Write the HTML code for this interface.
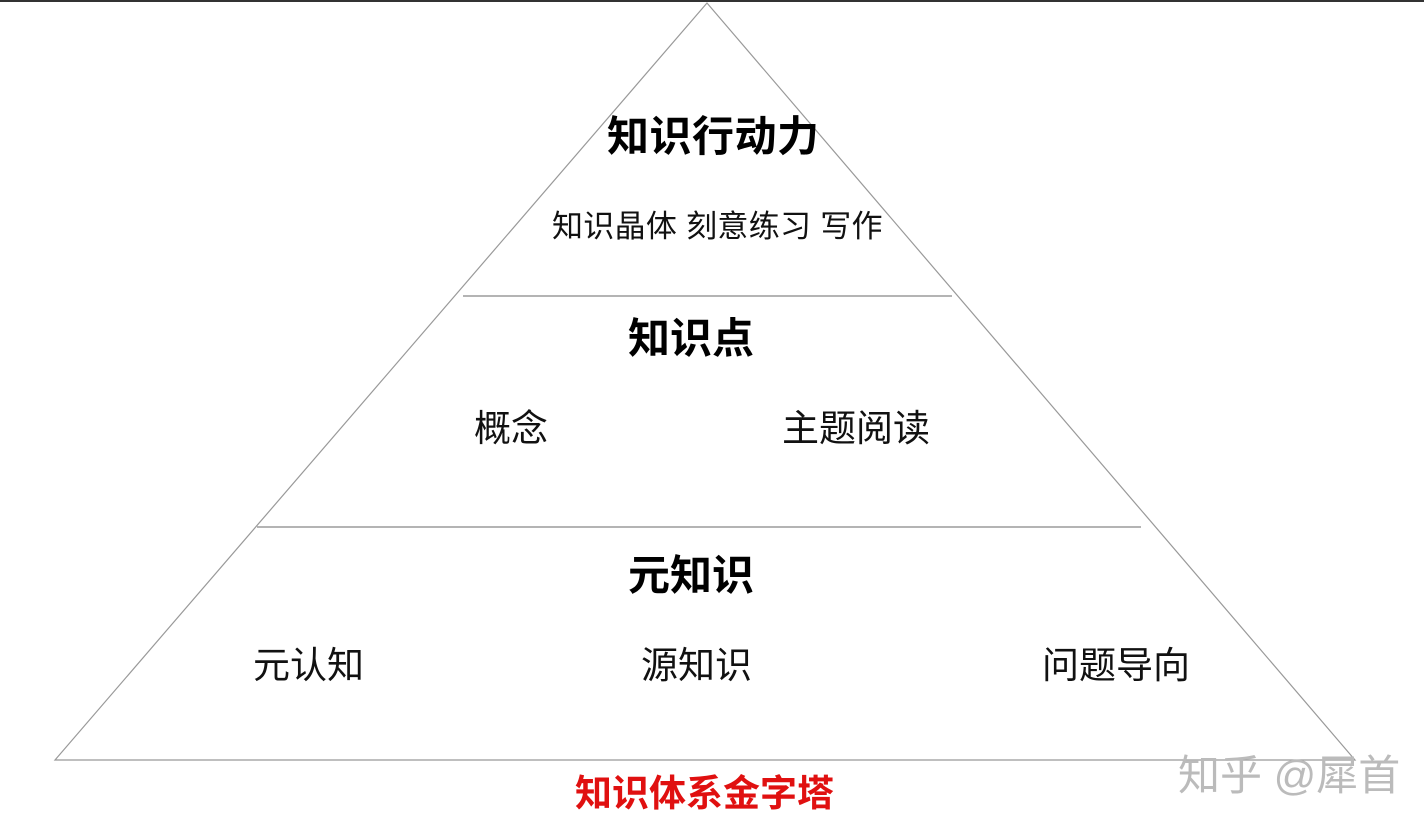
<!DOCTYPE html>
<html><head><meta charset="utf-8"><style>
html,body{margin:0;padding:0;background:#fff;width:1424px;height:830px;overflow:hidden;position:relative}
.t{position:absolute;white-space:nowrap;font-family:"Liberation Sans","Noto Sans CJK SC",sans-serif;color:#111;line-height:1}
.b{font-weight:bold;color:#000}
</style></head><body>
<div style="position:absolute;left:0;top:0;width:1424px;height:2px;background:#333"></div>
<svg width="1424" height="830" style="position:absolute;left:0;top:0">
<polygon points="707,3 55,760 1355,760" fill="none" stroke="#999" stroke-width="1.2"/>
<line x1="463" y1="296" x2="952" y2="296" stroke="#888" stroke-width="1.2"/>
<line x1="257" y1="527" x2="1141" y2="527" stroke="#888" stroke-width="1.2"/>
</svg>
<div class="t b" style="left:607px;top:116px;font-size:42px;letter-spacing:0.5px">知识行动力</div>
<div class="t" style="left:552px;top:211px;font-size:31px;letter-spacing:0.3px">知识晶体 刻意练习 写作</div>
<div class="t b" style="left:628px;top:318px;font-size:42px">知识点</div>
<div class="t" style="left:474px;top:410px;font-size:37px">概念</div>
<div class="t" style="left:782px;top:410px;font-size:37px">主题阅读</div>
<div class="t b" style="left:628px;top:555px;font-size:42px">元知识</div>
<div class="t" style="left:253px;top:647px;font-size:37px">元认知</div>
<div class="t" style="left:641px;top:647px;font-size:37px">源知识</div>
<div class="t" style="left:1042px;top:647px;font-size:37px">问题导向</div>
<div class="t b" style="left:575px;top:775px;font-size:37px;color:#e01010">知识体系金字塔</div>
<div class="t" style="left:1178px;top:755px;font-size:42px;color:#bbb">知乎 @犀首</div>
</body></html>
